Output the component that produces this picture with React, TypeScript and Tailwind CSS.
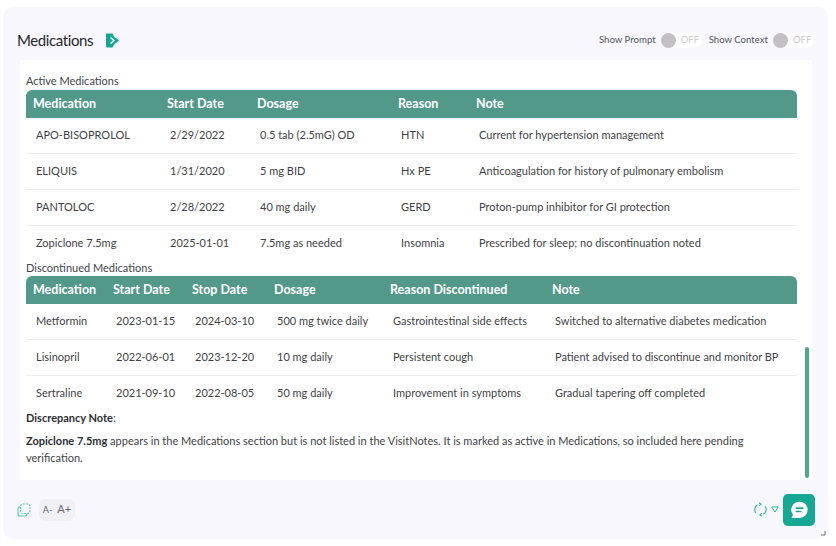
const active = [
  ["APO-BISOPROLOL", "2/29/2022", "0.5 tab (2.5mG) OD", "HTN", "Current for hypertension management"],
  ["ELIQUIS", "1/31/2020", "5 mg BID", "Hx PE", "Anticoagulation for history of pulmonary embolism"],
  ["PANTOLOC", "2/28/2022", "40 mg daily", "GERD", "Proton-pump inhibitor for GI protection"],
  ["Zopiclone 7.5mg", "2025-01-01", "7.5mg as needed", "Insomnia", "Prescribed for sleep; no discontinuation noted"],
];
const disc = [
  ["Metformin", "2023-01-15", "2024-03-10", "500 mg twice daily", "Gastrointestinal side effects", "Switched to alternative diabetes medication"],
  ["Lisinopril", "2022-06-01", "2023-12-20", "10 mg daily", "Persistent cough", "Patient advised to discontinue and monitor BP"],
  ["Sertraline", "2021-09-10", "2022-08-05", "50 mg daily", "Improvement in symptoms", "Gradual tapering off completed"],
];

function Table({ head, rows, widths }: { head: string[]; rows: string[][]; widths: number[] }) {
  return (
    <table className="w-[771px] table-fixed border-separate border-spacing-0">
      <colgroup>
        {widths.map((w, i) => (
          <col key={i} style={{ width: w }} />
        ))}
      </colgroup>
      <thead>
        <tr className="h-7 text-white">
          {head.map((h, i) => (
            <th
              key={h}
              className={`bg-[#52998a] px-[7px] pt-px text-left text-[12.5px] font-bold ${i === 0 ? "rounded-tl-md" : ""} ${i === head.length - 1 ? "rounded-tr-md" : ""}`}
            >
              {h}
            </th>
          ))}
        </tr>
      </thead>
      <tbody>
        {rows.map((r, i) => (
          <tr key={i} className="h-9">
            {r.map((c, j) => (
              <td
                key={j}
                className={`whitespace-nowrap border-b pl-[10px] pr-[2px] text-[11px] text-[#3f3f46] ${i < rows.length - 1 ? "border-[#eeeef2]" : "border-transparent"}`}
              >
                {c}
              </td>
            ))}
          </tr>
        ))}
      </tbody>
    </table>
  );
}

function Toggle({ label }: { label: string }) {
  return (
    <div className="flex items-center gap-[5px]">
      <span className="text-[9.6px] text-[#55555c]">{label}</span>
      <div className="flex h-[16px] w-[41px] items-center gap-[5px] rounded-full bg-white">
        <div className="h-[15px] w-[15px] rounded-full bg-[#c2c0c4]" />
        <span className="text-[9.5px] text-[#cfcdd2]">OFF</span>
      </div>
    </div>
  );
}

export default function App() {
  return (
    <div className="h-[546px] w-[836px] overflow-hidden bg-white pl-[3px] pt-[7px] font-['Lato',sans-serif]">
      <div className="relative flex h-[532px] w-[825px] flex-col rounded-[10px] bg-[#f8f7fd]">
        <header className="flex h-[53px] shrink-0 items-center justify-between pl-[14px] pr-[14px] pt-[13px]">
          <div className="flex items-center gap-[13px]">
            <h1 className="text-[15px] tracking-[-0.4px] text-[#26262b]">Medications</h1>
            <svg width="13" height="15" viewBox="0 0 13 15">
              <path d="M0 0.5h6.5L8 3.5l5 4-5 4-1.5 3H1.2A1.2 1.2 0 0 1 0 13.3z" fill="#17a594" />
              <path d="M4.5 4.5L8 7.5l-3.5 3" fill="none" stroke="#f8f7fd" strokeWidth="1.5" />
            </svg>
          </div>
          <div className="flex items-center gap-[7px]">
            <Toggle label="Show Prompt" />
            <Toggle label="Show Context" />
          </div>
        </header>

        <main className="relative ml-[17px] h-[420px] w-[792px] shrink-0 bg-white pl-[6px] pt-[14px] text-[#3f3f46]">
          <div className="h-4 text-[11px] leading-[14px] text-[#44444b]">Active Medications</div>
          <Table
            head={["Medication", "Start Date", "Dosage", "Reason", "Note"]}
            rows={active}
            widths={[134, 90, 141, 78, 328]}
          />
          <div className="h-[14px] text-[11px] leading-[11px] text-[#44444b]">Discontinued Medications</div>
          <Table
            head={["Medication", "Start Date", "Stop Date", "Dosage", "Reason Discontinued", "Note"]}
            rows={disc}
            widths={[80, 79, 82, 116, 162, 252]}
          />
          <p className="mt-[-1px] text-[11px] leading-[14px]">
            <b className="font-bold text-[#2e2e33]">Discrepancy Note</b>:
          </p>
          <p className="mt-[7px] w-[765px] text-[11px] leading-[17px]">
            <b className="font-bold text-[#2e2e33]">Zopiclone 7.5mg</b> appears in the Medications section but is not
            listed in the VisitNotes. It is marked as active in Medications, so included here pending verification.
          </p>
          <div className="absolute right-[3px] top-[287px] h-[131px] w-1 rounded-full bg-[#4da98e]" />
        </main>

        <footer className="flex flex-1 items-center justify-between pl-[14px] pr-[13px]">
          <div className="flex items-center gap-[8px]">
            <svg width="14" height="14" viewBox="0 0 14 14" fill="none" stroke="#5cc5b6" strokeWidth="1.1">
              <rect x="3.5" y="1" width="9.5" height="9.5" rx="2.5" strokeDasharray="2 1" />
              <path d="M3.5 4H3a2 2 0 0 0-2 2v5a2 2 0 0 0 2 2h5a2 2 0 0 0 2-2v-.5" />
            </svg>
            <div className="flex h-[22px] w-[36px] items-center justify-center gap-[5px] rounded-md bg-[#f1f0f5] text-[#66666d]">
              <span className="text-[9px]">A-</span>
              <span className="text-[11px]">A+</span>
            </div>
          </div>
          <div className="flex items-center gap-[4px]">
            <svg width="13" height="15" viewBox="0 0 13 15" fill="none" stroke="#2fb3a0" strokeWidth="1.1">
              <path d="M2 11a5.5 5.5 0 0 1 1.5-8.2M11 4a5.5 5.5 0 0 1-1.5 8.2" />
              <path d="M5 .8L7 2.3 5 3.9M8 14.2L6 12.7 8 11.1" />
            </svg>
            <svg width="8" height="7" viewBox="0 0 8 7" fill="none" stroke="#2fb3a0" strokeWidth="1">
              <path d="M.8 1h6.4L4 6z" />
            </svg>
            <div className="flex h-8 w-8 items-center justify-center rounded-[5px] bg-[#16a894]">
              <svg width="20" height="20" viewBox="0 0 18 18">
                <path d="M9.5 1.5a7.3 7.3 0 0 1 0 14.6H2.2l1.4-2.8A7.3 7.3 0 0 1 9.5 1.5z" fill="white" />
                <path d="M6.5 7.3h6M6.5 10.3h4" stroke="#16a894" strokeWidth="1.4" strokeLinecap="round" />
              </svg>
            </div>
          </div>
        </footer>
        <svg className="absolute bottom-[3px] right-[2px]" width="6" height="6" viewBox="0 0 6 6" fill="none" stroke="#77777c">
          <path d="M5 1v4H1" />
        </svg>
      </div>
    </div>
  );
}
